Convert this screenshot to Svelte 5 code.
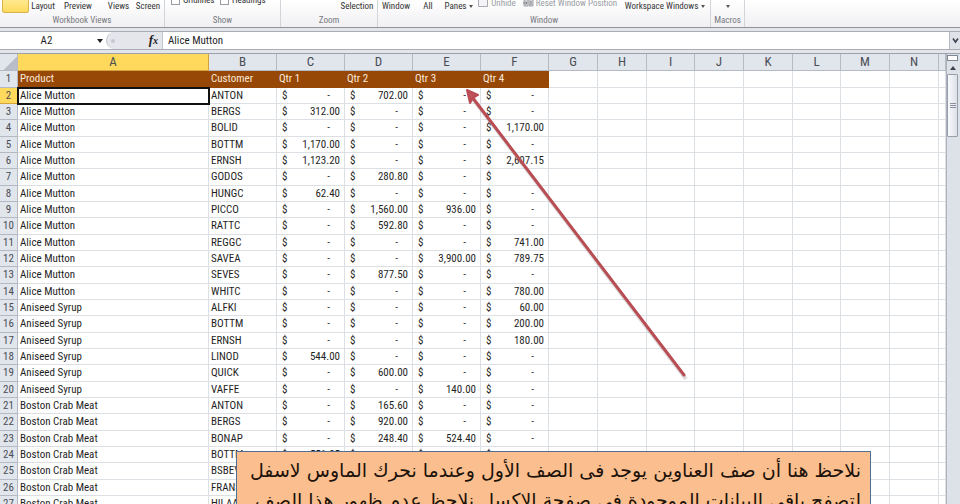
<script lang="ts">
  type Row = [product: string, customer: string, q1: string, q2: string, q3: string, q4: string];

  const columns = [
    { name: 'A', width: 191 },
    { name: 'B', width: 68 },
    { name: 'C', width: 68 },
    { name: 'D', width: 68 },
    { name: 'E', width: 68 },
    { name: 'F', width: 68 },
    { name: 'G', width: 49 },
    { name: 'H', width: 49 },
    { name: 'I', width: 48 },
    { name: 'J', width: 49 },
    { name: 'K', width: 49 },
    { name: 'L', width: 48 },
    { name: 'M', width: 49 },
    { name: 'N', width: 49 },
  ];

  const titles = ['Product', 'Customer', 'Qtr 1', 'Qtr 2', 'Qtr 3', 'Qtr 4'];
  const blanks = columns.slice(titles.length);

  const rows: Row[] = [
    ['Alice Mutton', 'ANTON', '-', '702.00', '-', '-'],
    ['Alice Mutton', 'BERGS', '312.00', '-', '-', '-'],
    ['Alice Mutton', 'BOLID', '-', '-', '-', '1,170.00'],
    ['Alice Mutton', 'BOTTM', '1,170.00', '-', '-', '-'],
    ['Alice Mutton', 'ERNSH', '1,123.20', '-', '-', '2,607.15'],
    ['Alice Mutton', 'GODOS', '-', '280.80', '-', '-'],
    ['Alice Mutton', 'HUNGC', '62.40', '-', '-', '-'],
    ['Alice Mutton', 'PICCO', '-', '1,560.00', '936.00', '-'],
    ['Alice Mutton', 'RATTC', '-', '592.80', '-', '-'],
    ['Alice Mutton', 'REGGC', '-', '-', '-', '741.00'],
    ['Alice Mutton', 'SAVEA', '-', '-', '3,900.00', '789.75'],
    ['Alice Mutton', 'SEVES', '-', '877.50', '-', '-'],
    ['Alice Mutton', 'WHITC', '-', '-', '-', '780.00'],
    ['Aniseed Syrup', 'ALFKI', '-', '-', '-', '60.00'],
    ['Aniseed Syrup', 'BOTTM', '-', '-', '-', '200.00'],
    ['Aniseed Syrup', 'ERNSH', '-', '-', '-', '180.00'],
    ['Aniseed Syrup', 'LINOD', '544.00', '-', '-', '-'],
    ['Aniseed Syrup', 'QUICK', '-', '600.00', '-', '-'],
    ['Aniseed Syrup', 'VAFFE', '-', '-', '140.00', '-'],
    ['Boston Crab Meat', 'ANTON', '-', '165.60', '-', '-'],
    ['Boston Crab Meat', 'BERGS', '-', '920.00', '-', '-'],
    ['Boston Crab Meat', 'BONAP', '-', '248.40', '524.40', '-'],
    ['Boston Crab Meat', 'BOTTM', '551.25', '-', '-', '-'],
    ['Boston Crab Meat', 'BSBEV', '', '', '', ''],
    ['Boston Crab Meat', 'FRANS', '', '', '', ''],
    ['Boston Crab Meat', 'HILAA', '', '', '', ''],
  ];

  let cellName = $state('A2');
  let formula = $state('Alice Mutton');
</script>

<main>
  <header class="ribbon">
    <section class="group views">
      <div class="tools">
        <button class="active" aria-label="Normal"></button>
        <button>Layout</button>
        <button>Preview</button>
        <button>Views</button>
        <button>Screen</button>
      </div>
      <h2>Workbook Views</h2>
    </section>
    <section class="group show">
      <div class="tools">
        <label><input type="checkbox" />Gridlines</label>
        <label><input type="checkbox" />Headings</label>
      </div>
      <h2>Show</h2>
    </section>
    <section class="group zoom">
      <div class="tools"><button>Selection</button></div>
      <h2>Zoom</h2>
    </section>
    <section class="group window">
      <div class="tools">
        <button>Window</button>
        <button>All</button>
        <button>Panes <i class="caret"></i></button>
        <button class="small" disabled>
          <svg width="11" height="10" viewBox="0 0 11 10"><path d="M.5.5h9v8h-9z" fill="#f4f4f6" stroke="#a9abb1" /></svg>
          Unhide
        </button>
        <button class="small" disabled>
          <svg width="11" height="10" viewBox="0 0 11 10">
            <path d="M1 1h4v7H1zM6 1h4v7H6z" fill="#d0d1d5" stroke="#a2a4aa" />
            <path d="M0 5h4M2.5 3.5 4 5 2.500 6.500M8 3v4" fill="none" stroke="#85878d" />
          </svg>
          Reset Window Position
        </button>
        <button>Workspace Windows <i class="caret"></i></button>
      </div>
      <h2>Window</h2>
    </section>
    <section class="group macros">
      <div class="tools"><button aria-label="Macros"><i class="caret"></i></button></div>
      <h2>Macros</h2>
    </section>
  </header>

  <div class="formula-bar">
    <input class="name-box" aria-label="Name box" bind:value={cellName} />
    <button class="name-arrow" aria-label="Open name list"><i class="caret big"></i></button>
    <div class="fx-area">
      <span class="knob"></span>
      <button class="fx" aria-label="Insert function"><em>f</em><em class="x">x</em></button>
    </div>
    <input class="formula" aria-label="Formula" bind:value={formula} />
    <button class="expand" aria-label="Expand formula bar">
      <svg width="7" height="7" viewBox="0 0 7 7"><path d="M1 1.500 3.500 5 6 1.500" fill="none" stroke="#3d4350" stroke-width="1.600" /></svg>
    </button>
  </div>

  <div class="sheet">
    <div class="cells">
      <table>
        <colgroup>
          <col class="num-col" />
          {#each columns as col}
            <col style="width: {col.width}px" />
          {/each}
          <col />
        </colgroup>
        <thead>
          <tr>
            <th class="corner" aria-label="Select all"></th>
            {#each columns as col}
              <th scope="col" class:picked={col.name === 'A'}>{col.name}</th>
            {/each}
            <th></th>
          </tr>
        </thead>
        <tbody>
          <tr>
            <th scope="row">1</th>
            {#each titles as title}
              <td class="title">{title}</td>
            {/each}
            {#each blanks as _}
              <td></td>
            {/each}
            <td></td>
          </tr>
          {#each rows as [product, customer, ...quarters], i}
            <tr>
              <th scope="row" class:picked={i === 0}>{i + 2}</th>
              <td class:cursor={i === 0}>{product}</td>
              <td>{customer}</td>
              {#each quarters as amount}
                <td>
                  {#if amount}
                    <div class="money" class:none={amount === '-'}><span>$</span><span>{amount}</span></div>
                  {/if}
                </td>
              {/each}
              {#each blanks as _}
                <td></td>
              {/each}
              <td></td>
            </tr>
          {/each}
        </tbody>
      </table>
    </div>
    <div class="scrollbar">
      <span class="split"></span>
      <button class="up" aria-label="Scroll up"><i></i></button>
      <div class="thumb"><i></i><i></i><i></i></div>
    </div>
  </div>

  <svg class="arrow" width="240" height="310" viewBox="0 0 240 310" aria-hidden="true">
    <path d="M15 17 231 301" stroke="#8f8a8a" stroke-opacity=".3" stroke-width="4" fill="none" />
    <path d="M14 15 229 297" stroke="#b94d54" stroke-width="3" fill="none" stroke-linecap="round" />
    <path d="M12 12 23 17 18 20 15 25z" fill="#c0505a" stroke="#b94d54" stroke-width="2" stroke-linejoin="round" />
  </svg>

  <p class="note" dir="rtl" lang="ar">
    نلاحظ هنا أن صف العناوين يوجد فى الصف الأول وعندما نحرك الماوس لاسفل<br />
    لتصفح باقى البيانات الموجودة فى صفحة الاكسل نلاحظ عدم ظهور هذا الصف
  </p>
</main>

<style>
  :global(body) {
    margin: 0;
    background: #fff;
  }

  main {
    position: relative;
    display: flex;
    flex-direction: column;
    height: 100vh;
    overflow: hidden;
    background: #e3e5ea;
    color: #1f1f1f;
    font: 11px/16px "Roboto Condensed", "Liberation Sans", sans-serif;
  }

  button,
  input {
    box-sizing: border-box;
    margin: 0;
    padding: 0;
    border: 0;
    background: none;
    color: inherit;
    font: inherit;
    white-space: nowrap;
  }

  .caret {
    display: inline-block;
    margin-left: 1px;
    border: 2px solid transparent;
    border-top: 3px solid #555;
    border-bottom: 0;
    vertical-align: middle;
  }

  .caret.big {
    border-width: 4px 3px 0;
    border-top-color: #222;
  }

  .ribbon {
    flex: none;
    display: flex;
    height: 27px;
    border-bottom: 1px solid #8f939c;
    background: linear-gradient(#fff, #f0f0f3);
    font-size: 9px;
    line-height: 14px;
    color: #333;
  }

  .group {
    box-sizing: border-box;
    display: flex;
    flex-direction: column;
    justify-content: flex-end;
    border-right: 1px solid #d2d4d9;
  }

  .views { width: 165px; }
  .show { width: 116px; }
  .zoom { width: 97px; }
  .window { width: 333px; }
  .macros { width: 34px; }

  h2 {
    margin: 0;
    font: inherit;
    text-align: center;
    color: #777980;
  }

  .tools {
    display: grid;
    align-content: end;
    align-items: end;
    height: 13px;
  }

  .tools button {
    display: flex;
    align-items: center;
    justify-content: center;
    gap: 2px;
    height: 14px;
  }

  .views .tools { grid-template-columns: 30px 26px 44px 37px 22px; }
  .show .tools { grid-template-columns: 49px 50px; padding-left: 6px; }
  .zoom .tools { grid-template-columns: 34px; padding-left: 59px; }
  .window .tools { grid-template-columns: 36px 28px 34px 42px 104px 86px; }

  .views .active {
    height: 20px;
    margin: 0 1px 0 2px;
    border: 1px solid #d9b44c;
    border-radius: 2px;
    background: linear-gradient(#fff0a8, #ffdb5e);
  }

  .show label {
    display: flex;
    align-items: center;
    gap: 3px;
    height: 26px;
  }

  .show input {
    appearance: none;
    width: 9px;
    height: 9px;
    border: 1px solid #9a9ca3;
    background: #fff;
  }

  .tools .small {
    height: 20px;
    color: #9b9da3;
  }

  .formula-bar {
    flex: none;
    display: flex;
    height: 17px;
    margin-top: 3px;
    border-top: 1px solid #a9adb6;
    border-bottom: 1px solid #a9adb6;
    background: #fff;
  }

  .name-box {
    width: 93px;
    text-align: center;
  }

  .name-arrow {
    width: 13px;
  }

  .fx-area {
    box-sizing: border-box;
    display: flex;
    align-items: center;
    justify-content: space-between;
    width: 57px;
    padding: 0 4px;
    border: solid #c3c6ce;
    border-width: 0 1px;
    border-radius: 9px 0 0 9px;
    background: #e4e6eb;
  }

  .knob {
    width: 4px;
    height: 4px;
    border-radius: 50%;
    background: #c6c9d1;
  }

  .fx {
    font: bold 13px/16px "Liberation Serif", serif;
  }

  .fx .x {
    font-size: 10px;
  }

  .formula {
    flex: 1;
    min-width: 0;
    padding-left: 5px;
  }

  .expand {
    display: flex;
    align-items: center;
    justify-content: center;
    width: 11px;
    border-left: 1px solid #b5b9c2;
    background: #dfe2e8;
  }

  .sheet {
    flex: 1;
    display: flex;
    min-height: 0;
    margin-top: 3px;
    border-top: 1px solid #9ca1ac;
  }

  .cells {
    flex: 1;
    min-width: 0;
    overflow: hidden;
    background: #fff;
  }

  table {
    width: 100%;
    table-layout: fixed;
    border-collapse: separate;
    border-spacing: 0;
  }

  .num-col {
    width: 18px;
  }

  th,
  td {
    box-sizing: border-box;
    height: 16px;
    padding: 0 0 0 2px;
    border: solid #dcdfe4;
    border-width: 0 1px 1px 0;
    line-height: 15px;
    white-space: nowrap;
  }

  tbody tr:nth-child(3n + 1) > * {
    height: 17px;
    line-height: 16px;
  }

  th {
    padding: 0;
    border-color: #b4b9c4;
    background: #e1e5ec;
    color: #4a4d55;
    font-weight: normal;
    text-align: center;
  }

  thead th {
    height: 17px;
    font-size: 13px;
    line-height: 16px;
  }

  .corner {
    background: linear-gradient(135deg, #e1e5ec 60%, #b8bdc8 60%);
  }

  .picked {
    border-color: #d3a43c;
    background: #ffd95c;
  }

  .title {
    border-color: #974806;
    background: #974806;
    color: #fbe9dc;
  }

  .cursor {
    outline: 2px solid #111;
    outline-offset: -1px;
  }

  .money {
    display: flex;
    justify-content: space-between;
    padding: 0 4px 0 3px;
  }

  .money.none {
    padding-right: 14px;
  }

  .scrollbar {
    box-sizing: border-box;
    display: flex;
    flex-direction: column;
    width: 14px;
    padding-right: 2px;
    border-left: 1px solid #aeb3be;
    background: #dde1e8;
  }

  .split {
    height: 4px;
    margin: 1px 0;
    border: 1px solid #7f8591;
    background: #fff;
  }

  .up {
    height: 12px;
  }

  .up i {
    display: block;
    width: 0;
    margin: 0 auto;
    border: 3px solid transparent;
    border-top: 0;
    border-bottom: 4px solid #3d4350;
  }

  .thumb {
    display: flex;
    flex-direction: column;
    align-items: center;
    justify-content: center;
    gap: 1px;
    height: 61px;
    border: 1px solid #979dab;
    border-radius: 1px;
    background: linear-gradient(90deg, #f8f9fb, #dde0e8);
  }

  .thumb i {
    width: 6px;
    height: 1px;
    background: #8b91a0;
  }

  .arrow {
    position: absolute;
    left: 455px;
    top: 78px;
  }

  .note {
    position: absolute;
    left: 236px;
    right: 89px;
    top: 451px;
    box-sizing: border-box;
    margin: 0;
    padding: 3px 9px;
    border: 1px solid #4f6f94;
    background: #fbbf8f;
    color: #1c120a;
    font: 19px/30px "DejaVu Sans", sans-serif;
    white-space: nowrap;
  }
</style>
